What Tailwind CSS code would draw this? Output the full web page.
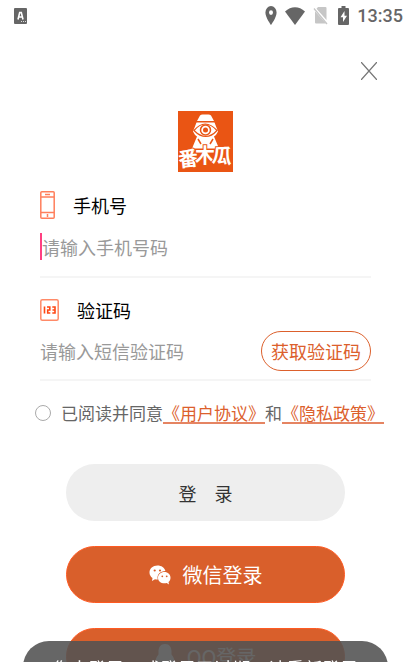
<!DOCTYPE html>
<html lang="zh-CN" class="h-full overflow-hidden">
<head>
<meta charset="utf-8">
<meta name="viewport" content="width=device-width, initial-scale=1">
<title>登录</title>
<script src="https://cdn.jsdelivr.net/npm/@tailwindcss/browser@4"></script>
</head>
<body class="h-full overflow-hidden bg-white font-['Noto_Sans_CJK_SC',sans-serif] text-lg leading-7 text-black">
<header class="flex h-[31px] items-center justify-between pl-3.5 pr-2 text-[#666]">
  <svg class="h-4 w-[13px]" viewBox="0 0 13 16" aria-hidden="true">
    <rect width="13" height="16" rx="1" fill="#666"/>
    <path d="M4 11.500 5.700 4.500h1.600L9 11.500M4.700 9h3.600" fill="none" stroke="#fff" stroke-width="1.600"/>
    <path d="M7 13.500h1M9 13.500h1M11 13.500h1" stroke="#ddd"/>
  </svg>
  <div class="flex items-center">
    <svg class="mr-2 h-[19px] w-3" viewBox="0 0 12 19" aria-hidden="true"><path fill="#666" fill-rule="evenodd" d="M6 0a5.600 6.500 0 0 0-5.600 6.500C.4 11.500 6 19 6 19s5.600-7.500 5.600-12.500A5.600 6.500 0 0 0 6 0Zm0 4.200a2 2.400 0 1 1 0 4.800 2 2.400 0 0 1 0-4.800Z"/></svg>
    <svg class="mr-2 h-[18px] w-5" viewBox="0 0 20 18" aria-hidden="true"><path fill="#666" d="M0 4.500C6-1.200 14-1.200 20 4.500L10 18Z"/></svg>
    <svg class="mr-2.5 h-[19px] w-[15px]" viewBox="0 0 15 19" aria-hidden="true"><path fill="#c6c6c6" d="M5 1h7.500q1 0 1 1v12L3.500 2.800ZM2 5.200 13 17.500H3q-1 0-1-1Z"/><path d="m1 2.500 13 15.500" stroke="#c6c6c6" stroke-width="1.300"/></svg>
    <svg class="mr-2 h-[19px] w-[11px]" viewBox="0 0 11 19" aria-hidden="true"><path fill="#666" d="M3.500 0h4v2H10q1 0 1 1v15q0 1-1 1H1q-1 0-1-1V3q0-1 1-1h2.500Z"/><path fill="#fff" d="M6.500 5 2.500 11.300H5V16l4-6.300H6.500Z"/></svg>
    <time class="font-[Roboto,sans-serif] text-lg font-medium leading-6">13:35</time>
  </div>
</header>

<main>
  <div class="flex justify-end px-7 pt-6">
    <button type="button" aria-label="关闭" class="flex h-8 w-7 items-center justify-center">
      <svg class="h-[18px] w-4" viewBox="0 0 16 18" fill="none" stroke="#777" stroke-width="1.300" aria-hidden="true"><path d="m0 0 16 18M16 0 0 18"/></svg>
    </button>
  </div>

  <svg class="mx-auto mt-6 h-[61px] w-[55px]" viewBox="0 0 55 61" role="img" aria-label="番木瓜">
    <rect width="55" height="61" fill="#ea5514"/>
    <path fill="#fff" d="M22 4.500q1-1 2.500-1h6q1.500 0 2.500 1l3 5.500H19ZM18.500 11.500h18l3.500 9q-1.500 3.500-4 5l5 12H14l5-12q-2.500-1.500-4-5Z"/>
    <path d="M16 19.500q11-13 23 0-11 12-23 0Z" fill="#fff" stroke="#ea5514" stroke-width="1.200"/>
    <circle cx="27.500" cy="19" r="5" fill="#fff" stroke="#ea5514" stroke-width="1.500"/>
    <circle cx="27.500" cy="19" r="2.500" fill="#ea5514"/>
    <path d="m20 28 3 5M35 28l-3 5" stroke="#ea5514" stroke-width="1.500"/>
    <g font-family="Noto Sans CJK SC, sans-serif" font-size="20" font-weight="700" fill="#fff" stroke="#ea5514" stroke-width="2" paint-order="stroke">
      <text x="0" y="55" transform="rotate(-6 10 46)">番</text>
      <text x="17" y="52">木</text>
      <text x="34" y="52" transform="rotate(5 44 45)">瓜</text>
    </g>
  </svg>

  <form>
    <div class="px-10 pt-[19px]">
      <label for="phone" class="flex h-7 items-center gap-[18px]">
        <svg class="h-7 w-[15px]" viewBox="0 0 15 28" fill="none" stroke="#ff7f5c" stroke-width="1.500" aria-hidden="true"><rect x=".8" y=".8" width="13.400" height="26.400" rx="1"/><path d="M1 6h13M1 21.500h13M5 3.500h5M7.500 23v3"/></svg>
        手机号
      </label>
      <div class="border-b-2 border-[#f5f5f5] pb-4 pt-3.5">
        <div class="-mr-0.5 border-l-2 border-[#ff4081]">
          <input id="phone" type="tel" placeholder="请输入手机号码" class="block h-[27px] w-full bg-transparent p-0 outline-none placeholder:text-[#999]">
        </div>
      </div>
      <label for="code" class="mt-[18px] flex h-7 items-center gap-[18px]">
        <svg class="h-[22px] w-[19px]" viewBox="0 0 19 22" fill="none" aria-hidden="true"><rect x=".8" y=".8" width="17.400" height="20.400" rx="1.500" stroke="#ff8a68" stroke-width="1.500"/><path d="M4.500 7.500V14.500M7 8h2.800v3H7.700v3h2.600M12.300 8H15v6h-2.700M12.500 11H15" stroke="#ff4713" stroke-width="1.600"/></svg>
        验证码
      </label>
      <div class="flex items-center border-b-2 border-[#f5f5f5] pb-2 pt-[7px]">
        <input id="code" type="text" inputmode="numeric" placeholder="请输入短信验证码" class="h-7 min-w-0 flex-1 bg-transparent p-0 outline-none placeholder:text-[#999]">
        <button type="button" class="h-10 shrink-0 rounded-full border border-[#dc602c] px-[9px] text-[#dc602c]">获取验证码</button>
      </div>
    </div>

    <div class="flex items-center gap-2.5 whitespace-nowrap pl-[35px] pt-[18px] text-[17px] text-[#666]">
      <input id="agree" type="checkbox" class="size-4 shrink-0 appearance-none rounded-full border border-[#aaa] bg-white">
      <div><label for="agree">已阅读并同意</label><a href="#terms" class="text-[#dc602c] underline decoration-[#e58462] decoration-2 underline-offset-2 [text-decoration-skip-ink:none]">《用户协议》</a>和<a href="#privacy" class="text-[#dc602c] underline decoration-[#e58462] decoration-2 underline-offset-2 [text-decoration-skip-ink:none]">《隐私政策》</a></div>
    </div>

    <div class="flex flex-col gap-[25px] px-[66px] pt-[37px]">
      <button type="submit" class="flex h-[57px] items-center justify-center gap-[18px] rounded-full bg-[#eee] text-[#333]"><span>登</span><span>录</span></button>
      <button type="button" class="flex h-[57px] items-center justify-center gap-3 rounded-full border border-[#ff5a22] bg-[#d95f2b] text-xl text-white">
        <svg class="h-5 w-[22px]" viewBox="0 0 22 20" aria-hidden="true">
          <path fill="#fff" d="M8.500.5C3.900.5.5 3.600.5 7.500c0 2.300 1.100 4.200 3 5.500L3 16l3-1.700c1 .2 1.800.3 2.800.2C7.500 10 11 6 16.400 6 15.500 2.700 12.400.5 8.500.5Z"/>
          <path fill="#fff" d="M15.500 7c-3.800 0-6.500 2.500-6.500 5.700s2.700 5.600 6.500 5.600c.8 0 1.500-.1 2.200-.3l2.300 1.500-.5-2.400c1.300-1.100 2-2.600 2-4.400 0-3.200-2.500-5.700-6-5.700Z"/>
          <g fill="#d95f2b"><circle cx="5.700" cy="5.500" r="1.100"/><circle cx="11" cy="5.500" r="1.100"/><circle cx="13.300" cy="11.300" r=".9"/><circle cx="17.700" cy="11.300" r=".9"/></g>
        </svg>
        微信登录
      </button>
      <button type="button" class="flex h-[57px] items-center justify-center gap-3 rounded-full border border-[#ff5a22] bg-[#d95f2b] text-xl text-white">
        <svg class="h-[25px] w-5" viewBox="0 0 20 25" fill="#fff" aria-hidden="true"><path d="M10 0C5.500 0 3.500 3.500 3.500 7.500v3C2 12.500.5 15 .5 17.500c0 1.500.7 2.200 1.500 1.500l1.200-1.500c.4 1.700 1 2.800 2 3.700-1.500.7-2 1.500-1.500 2.300.8 1.200 4.800 1.200 6.300 0 1.500 1.200 5.500 1.200 6.300 0 .5-.8 0-1.600-1.500-2.300 1-.9 1.600-2 2-3.700L18 19c.8.700 1.500 0 1.500-1.500 0-2.500-1.500-5-3-7v-3C16.500 3.500 14.500 0 10 0Z"/></svg>
        QQ登录
      </button>
    </div>
  </form>
</main>

<div role="status" class="fixed inset-x-[23px] -bottom-8 flex h-[53px] items-center justify-center whitespace-nowrap rounded-[26px] bg-[#535353]/89 text-white">您未登录，或登录已过期，请重新登录</div>
</body>
</html>
